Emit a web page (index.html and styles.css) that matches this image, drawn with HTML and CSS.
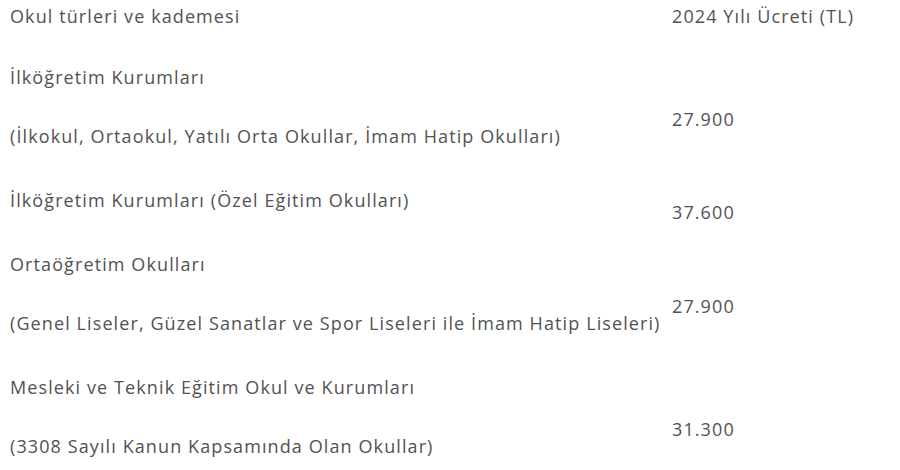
FILE: index.html
```html
<!DOCTYPE html>
<html lang="tr">
<head>
<meta charset="utf-8">
<title>Ücretler</title>
<link rel="stylesheet" href="styles.css">
</head>
<body>
<table class="fees">
  <tbody>
    <tr class="head">
      <td class="type"><p>Okul türleri ve kademesi</p></td>
      <td class="price"><p>2024 Yılı Ücreti (TL)</p></td>
    </tr>
    <tr>
      <td class="type"><p>İlköğretim Kurumları</p><p>(İlkokul, Ortaokul, Yatılı Orta Okullar, İmam Hatip Okulları)</p></td>
      <td class="price">27.900</td>
    </tr>
    <tr>
      <td class="type"><p>İlköğretim Kurumları (Özel Eğitim Okulları)</p></td>
      <td class="price">37.600</td>
    </tr>
    <tr>
      <td class="type"><p>Ortaöğretim Okulları</p><p>(Genel Liseler, Güzel Sanatlar ve Spor Liseleri ile İmam Hatip Liseleri)</p></td>
      <td class="price">27.900</td>
    </tr>
    <tr>
      <td class="type"><p>Mesleki ve Teknik Eğitim Okul ve Kurumları</p><p>(3308 Sayılı Kanun Kapsamında Olan Okullar)</p></td>
      <td class="price">31.300</td>
    </tr>
  </tbody>
</table>
</body>
</html>
```

FILE: styles.css
```css
html, body {
  margin: 0;
  padding: 0;
  background: #ffffff;
}

body {
  font-family: "Open Sans", "Noto Sans", sans-serif;
  font-size: 18px;
  letter-spacing: 1.1px;
  color: #525252;
}

.fees {
  border-collapse: collapse;
  margin-left: 10px;
}

.fees td {
  padding: 0 0 5px 0;
  vertical-align: middle;
  line-height: 35px;
  white-space: nowrap;
}

.fees td.type {
  width: 662px;
}

.fees p {
  margin: 0 0 24px 0;
  line-height: 35px;
}

.fees .head td {
  padding-bottom: 4px;
}

.fees .head p {
  line-height: 32px;
  margin-bottom: 24px;
}
```
